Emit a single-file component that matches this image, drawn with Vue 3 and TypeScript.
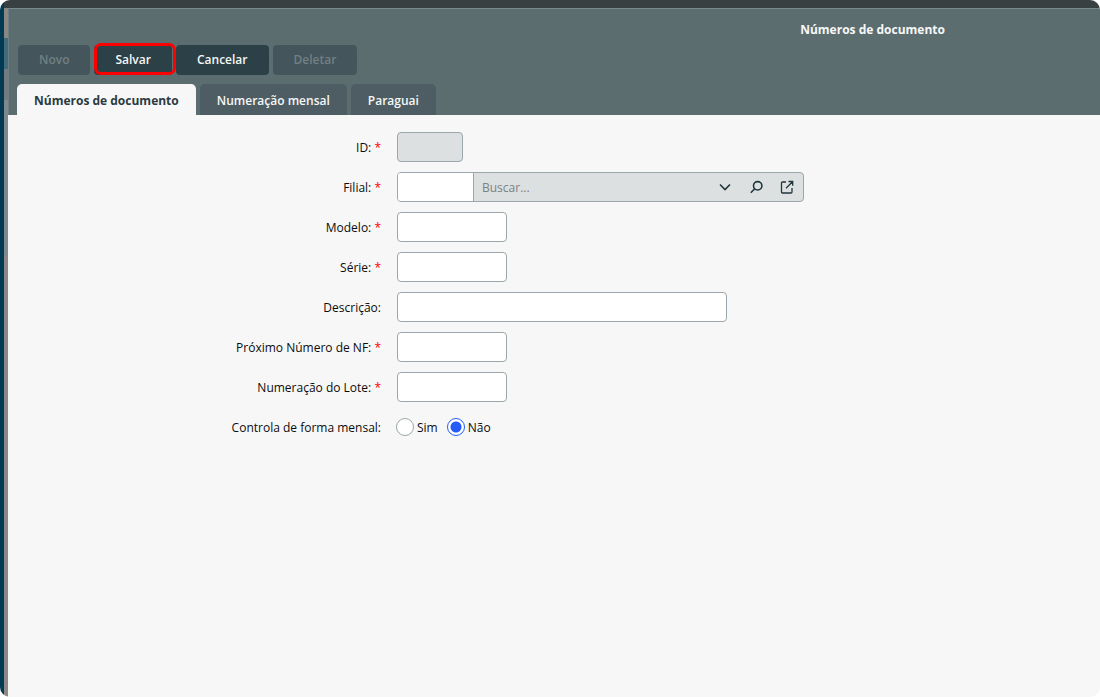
<script setup lang="ts">
import { ref } from 'vue'

interface Field {
  id: string
  label: string
  required: boolean
  size: 'tiny' | 'short' | 'long'
  disabled?: boolean
  lookup?: boolean
}

const fields: Field[] = [
  { id: 'id', label: 'ID:', required: true, size: 'tiny', disabled: true },
  { id: 'filial', label: 'Filial:', required: true, size: 'short', lookup: true },
  { id: 'modelo', label: 'Modelo:', required: true, size: 'short' },
  { id: 'serie', label: 'Série:', required: true, size: 'short' },
  { id: 'descricao', label: 'Descrição:', required: false, size: 'long' },
  { id: 'proximo', label: 'Próximo Número de NF:', required: true, size: 'short' },
  { id: 'lote', label: 'Numeração do Lote:', required: true, size: 'short' },
]

const tabs = ['Números de documento', 'Numeração mensal', 'Paraguai']
const activeTab = ref(0)
const monthly = ref('nao')
</script>

<template>
  <div class="window">
    <div class="topbar"></div>
    <div class="body">
      <div class="edge"></div>
      <div class="strip"></div>
      <main class="panel">
        <header class="header">
          <h1 class="title">Números de documento</h1>
          <div class="actions">
            <button type="button" class="btn" disabled>Novo</button>
            <button type="button" class="btn highlighted">Salvar</button>
            <button type="button" class="btn">Cancelar</button>
            <button type="button" class="btn" disabled>Deletar</button>
          </div>
          <nav class="tabs" role="tablist">
            <button
              v-for="(tab, i) in tabs"
              :key="tab"
              type="button"
              role="tab"
              class="tab"
              :class="{ active: i === activeTab }"
              :aria-selected="i === activeTab"
              @click="activeTab = i"
            >{{ tab }}</button>
          </nav>
        </header>
        <form class="form" @submit.prevent>
          <div v-for="f in fields" :key="f.id" class="row">
            <label class="label" :for="f.id">{{ f.label }}<span v-if="f.required" class="star"> *</span></label>
            <div v-if="f.lookup" class="lookup">
              <input :id="f.id" class="code" type="text" />
              <input class="search" type="text" placeholder="Buscar..." aria-label="Buscar filial" />
              <button type="button" class="icon" aria-label="Abrir lista">
                <svg width="14" height="14" viewBox="0 0 14 14"><path d="M2 4.5 7 9.5 12 4.5" /></svg>
              </button>
              <button type="button" class="icon" aria-label="Pesquisar">
                <svg width="14" height="14" viewBox="0 0 14 14"><circle cx="8.7" cy="5.8" r="4.2" /><path d="M5.7 8.8 1.8 12.7" /></svg>
              </button>
              <button type="button" class="icon" aria-label="Abrir cadastro">
                <svg class="thin" width="14" height="14" viewBox="0 0 14 14"><path d="M6 2H2.5Q1.5 2 1.5 3V12Q1.5 13 2.5 13H11Q12 13 12 12V8M8.5 1.5H12.7V5.7M12.5 1.7 6 8.2" /></svg>
              </button>
            </div>
            <input v-else :id="f.id" type="text" class="field" :class="f.size" :disabled="f.disabled" />
          </div>
          <div class="row" role="radiogroup" aria-labelledby="monthly-label">
            <span id="monthly-label" class="label">Controla de forma mensal:</span>
            <div class="radios">
              <label class="option"><input v-model="monthly" type="radio" name="monthly" value="sim" /><span>Sim</span></label>
              <label class="option"><input v-model="monthly" type="radio" name="monthly" value="nao" /><span>Não</span></label>
            </div>
          </div>
        </form>
      </main>
    </div>
  </div>
</template>

<style>
body {
  background: #fff;
}
</style>

<style scoped>
.window {
  display: flex;
  flex-direction: column;
  min-height: 100vh;
  border-radius: 10px;
  overflow: hidden;
  background: #f7f7f7;
  font: 12px/16px "Open Sans", "Noto Sans", sans-serif;
  color: #0c0c0c;
}
.window *,
.window {
  box-sizing: border-box;
}
.topbar {
  height: 8px;
  margin-left: 4px;
  background: #384042;
}
.body {
  flex: 1;
  display: flex;
}
.edge {
  width: 4px;
  margin-top: -8px;
  background: linear-gradient(90deg, #023a54 75%, #143544 75%);
}
.strip {
  width: 4px;
  background: linear-gradient(#8b8785 30px, #426b7b 30px, #426b7b 61px, #747b7f 61px, #747b7f 92px, #7e898d 92px, #7e898d 248px, #8c8885 248px);
}
.panel {
  flex: 1;
  min-width: 0;
}
.header {
  height: 107px;
  padding-left: 8px;
  border-top: 1px solid #788a8e;
  border-left: 1px solid #6d7f83;
  background: #5c6d70;
}
.title {
  margin: 0;
  padding: 12px 0 7px 58%;
  font-size: 12px;
  line-height: 17px;
  font-weight: 700;
  text-align: center;
  color: #f7f7f7;
}
.actions {
  display: flex;
  gap: 4px;
  padding-left: 1px;
}
.btn {
  height: 30px;
  padding: 0 21px;
  border: 0;
  border-radius: 4px;
  background: #2b4147;
  color: #f7f7f7;
  font: inherit;
  font-weight: 600;
}
.btn:disabled {
  background: #44555b;
  color: #718085;
}
.highlighted {
  position: relative;
}
.highlighted::after {
  content: "";
  position: absolute;
  inset: -2px -4px 0 0;
  border: 3px solid #f00;
  border-radius: 7px;
}
.tabs {
  display: flex;
  gap: 4px;
  margin-top: 9px;
}
.tab {
  height: 31px;
  padding: 2px 17px 0;
  border: 0;
  border-radius: 5px 5px 0 0;
  background: #4d5d63;
  color: #f7f7f7;
  font: inherit;
  font-weight: 600;
}
.tab.active {
  background: #f7f7f7;
  color: #2b3b40;
  font-weight: 700;
}
.form {
  display: flex;
  flex-direction: column;
  gap: 10px;
  padding: 17px 0;
}
.row {
  display: flex;
  align-items: center;
  gap: 16px;
  height: 30px;
}
.label {
  width: 373px;
  padding-top: 2px;
  text-align: right;
}
.star {
  color: #f00;
}
.field,
.lookup {
  height: 30px;
  border: 1px solid #9ba7aa;
  border-radius: 4px;
  background: #fff;
}
.field {
  padding: 0 7px;
  font: inherit;
}
.tiny {
  width: 66px;
}
.short {
  width: 110px;
}
.long {
  width: 330px;
}
.field:disabled {
  background: #dce0e0;
}
.lookup {
  display: flex;
  width: 407px;
  padding-right: 1px;
  overflow: hidden;
  background: #dce0e0;
}
.code,
.search {
  min-width: 0;
  border: 0;
  padding: 2px 8px 0;
  font: inherit;
}
.code {
  width: 76px;
  background: #fff;
  border-right: 1px solid #9ba7aa;
}
.search {
  flex: 1;
  background: transparent;
}
.search::placeholder {
  color: #7b8284;
}
.icon {
  display: flex;
  align-items: center;
  justify-content: center;
  width: 31px;
  padding: 0;
  border: 0;
  background: transparent;
}
.icon svg {
  fill: none;
  stroke: #20363d;
  stroke-width: 1.6;
}
.icon .thin {
  stroke-width: 1.3;
}
.radios {
  display: flex;
  gap: 9px;
  margin-left: -1px;
}
.option {
  display: flex;
  align-items: center;
  gap: 3px;
}
.option span {
  padding-top: 2px;
}
.option input {
  appearance: none;
  width: 18px;
  height: 18px;
  margin: 0;
  border: 1px solid #9ba7aa;
  border-radius: 50%;
  background: #fff;
}
.option input:checked {
  border-color: #245cf5;
  background: radial-gradient(circle, #245cf5 5px, #fff 6px);
}
</style>
